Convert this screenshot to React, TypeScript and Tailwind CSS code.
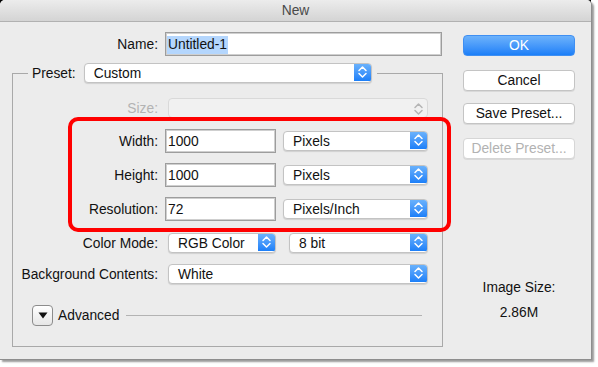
import React from "react";

function Chevrons({ color = "#ffffff" }: { color?: string }) {
  return (
    <svg width="17" height="20" viewBox="0 0 17 20" fill="none">
      <path d="M5 8.5 L8.5 5 L12 8.5" stroke={color} strokeWidth="1.5" strokeLinecap="round" strokeLinejoin="round" />
      <path d="M5 11.5 L8.5 15 L12 11.5" stroke={color} strokeWidth="1.5" strokeLinecap="round" strokeLinejoin="round" />
    </svg>
  );
}

function Popup({ text, className }: { text: string; className: string }) {
  return (
    <div className={`flex h-[20px] rounded-[4px] border border-[#c3c3c3] bg-white shadow-[0_1px_1px_rgba(0,0,0,0.12)] overflow-hidden ${className}`}>
      <span className="flex-1 pl-[9px] leading-[20px] text-[13.8px] text-[#111]">{text}</span>
      <div className="w-[17px] h-full bg-gradient-to-b from-[#6db4fc] to-[#1b7ff8] flex items-center justify-center -mt-px">
        <Chevrons />
      </div>
    </div>
  );
}

function TextField({ value, className }: { value: string; className: string }) {
  return (
    <div className={`h-[24px] bg-white border border-[#9d9d9d] shadow-[inset_0_0_0_1px_#cfcfcf] pl-[2px] pt-[2px] flex items-center text-[13.8px] text-[#111] ${className}`}>
      {value}
    </div>
  );
}

function Button({ text, className = "" }: { text: string; className?: string }) {
  return (
    <div className={`w-[112px] h-[21px] rounded-[4px] border border-[#c4c4c4] bg-white shadow-[0_1px_0_rgba(0,0,0,0.08)] flex items-center justify-center pt-px text-[13.8px] text-[#111] ${className}`}>
      {text}
    </div>
  );
}

function Label({ text, className = "" }: { text: string; className?: string }) {
  return <div className={`w-[145px] text-right pt-[2px] whitespace-nowrap ${className}`}>{text}</div>;
}

export default function App() {
  return (
    <div className="relative w-[598px] h-[367px] bg-white overflow-hidden font-['Liberation_Sans',Arial,sans-serif] text-[13.8px] text-[#111]">
      <div className="absolute left-0 top-0 w-[4px] h-[4px] bg-black" />
      <div className="absolute left-[587px] top-0 w-[4px] h-[4px] bg-black" />
      <div className="relative w-[592px] h-[360px] bg-[#ececec] border-r border-b border-[#8e8e8e] rounded-t-[5px] shadow-[2px_2px_2px_rgba(0,0,0,0.4)] flex flex-col">
        {/* title bar */}
        <div className="h-[22px] rounded-t-[5px] border-b border-[#b1b1b1] bg-gradient-to-b from-[#ececec] to-[#d4d4d4] flex items-center justify-center pt-px text-[#4a4a4a]">
          New
        </div>
        <div className="flex">
          {/* left column */}
          <div className="w-[443px] flex flex-col">
            <div className="mt-[10px] flex items-center h-[24px]">
              <div className="w-[158px] text-right pt-[2px]">Name:</div>
              <div className="ml-[7px] w-[277px] h-[24px] bg-white border border-[#9d9d9d] shadow-[inset_0_0_0_1px_#cfcfcf] pl-[1px] flex items-center">
                <span className="bg-[#b4d6fd] px-[1px] mt-[1px] leading-[18px]">Untitled-1</span>
              </div>
            </div>
            {/* group box */}
            <div className="mt-[17px] ml-[12px] w-[431px] border-l border-r border-b border-[#a9a9a9] flex flex-col pb-[20px]">
              <div className="-mt-[10px] h-[20px] flex items-center">
                <div className="w-[15px] h-px bg-[#a9a9a9]" />
                <div className="ml-[4px] pt-[2px]">Preset:</div>
                <Popup text="Custom" className="ml-[8px] w-[288px]" />
                <div className="ml-[5px] flex-1 h-px bg-[#a9a9a9]" />
              </div>
              <div className="mt-[15px] h-[20px] flex items-center">
                <Label text="Size:" className="text-[#b3b3b3]" />
                <div className="ml-[10px] w-[260px] h-[20px] rounded-[4px] border border-[#d9d9d9] bg-[#f1f1f1] flex justify-end">
                  <Chevrons color="#b5b5b5" />
                </div>
              </div>
              <div className="mt-[11px] h-[24px] flex items-center">
                <Label text="Width:" />
                <TextField value="1000" className="ml-[7px] w-[111px]" />
                <Popup text="Pixels" className="ml-[7px] w-[145px]" />
              </div>
              <div className="mt-[10px] h-[24px] flex items-center">
                <Label text="Height:" />
                <TextField value="1000" className="ml-[7px] w-[111px]" />
                <Popup text="Pixels" className="ml-[7px] w-[145px]" />
              </div>
              <div className="mt-[10px] h-[24px] flex items-center">
                <Label text="Resolution:" />
                <TextField value="72" className="ml-[7px] w-[111px]" />
                <Popup text="Pixels/Inch" className="ml-[7px] w-[145px]" />
              </div>
              <div className="mt-[12px] h-[20px] flex items-center">
                <Label text="Color Mode:" />
                <Popup text="RGB Color" className="ml-[10px] w-[108px]" />
                <Popup text="8 bit" className="ml-[13px] w-[139px]" />
              </div>
              <div className="mt-[11px] h-[20px] flex items-center">
                <Label text="Background Contents:" />
                <Popup text="White" className="ml-[10px] w-[260px]" />
              </div>
              <div className="mt-[21px] h-[21px] flex items-center">
                <div className="ml-[19px] w-[21px] h-[21px] rounded-[4px] border border-[#8c8c8c] bg-gradient-to-b from-white to-[#e6e6e6] flex items-center justify-center">
                  <svg width="10" height="7" viewBox="0 0 10 7">
                    <path d="M0.5 0.5 L9.5 0.5 L5 6.5 Z" fill="#111" />
                  </svg>
                </div>
                <div className="ml-[5px] pt-[2px]">Advanced</div>
                <div className="ml-[7px] flex-1 mr-[20px] h-px bg-[#b3b3b3]" />
              </div>
            </div>
          </div>
          {/* right column */}
          <div className="ml-[20px] w-[112px] flex flex-col items-center">
            <div className="mt-[13px] w-[112px] h-[21px] rounded-[4px] bg-gradient-to-b from-[#6cb2fb] to-[#1a7ff8] border border-[#3f8ff2] flex items-center justify-center pt-px text-white">
              OK
            </div>
            <Button text="Cancel" className="mt-[14px]" />
            <Button text="Save Preset..." className="mt-[12px]" />
            <Button text="Delete Preset..." className="mt-[14px] text-[#b2b2b2] border-[#d6d6d6] bg-[#f6f6f6]" />
            <div className="mt-[121px] leading-[16px] whitespace-nowrap">Image Size:</div>
            <div className="mt-[9px] leading-[16px]">2.86M</div>
          </div>
        </div>
      </div>
      {/* annotation overlay */}
      <div className="absolute left-[68px] top-[117px] w-[383px] h-[115px] border-4 border-[#ff0000] rounded-[10px]" />
    </div>
  );
}
